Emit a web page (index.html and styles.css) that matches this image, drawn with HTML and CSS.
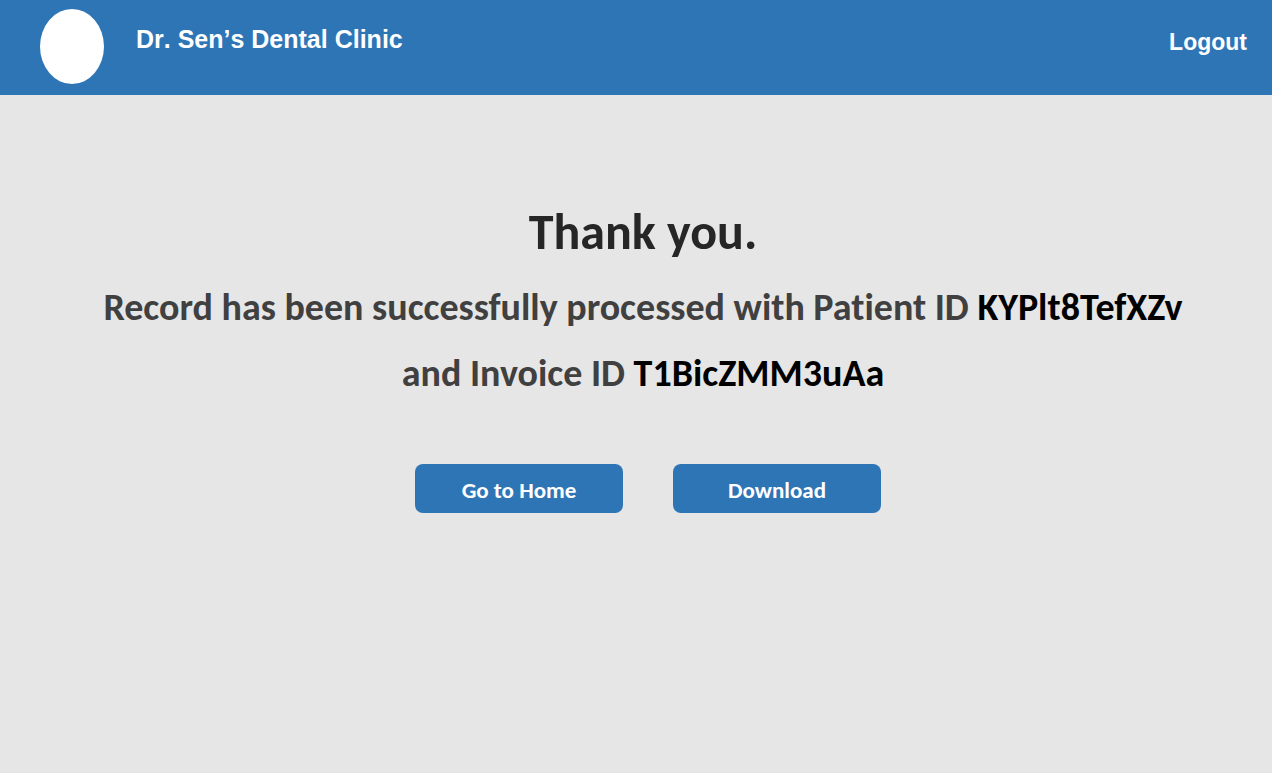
FILE: index.html
```html
<!DOCTYPE html>
<html lang="en">
<head>
<meta charset="utf-8">
<meta name="viewport" content="width=device-width, initial-scale=1">
<title>Dr. Sen’s Dental Clinic</title>
<link rel="stylesheet" href="styles.css">
</head>
<body>
<header class="topbar">
  <div class="brand">
    <span class="brand-logo" aria-hidden="true"></span>
    <span class="brand-name">Dr. Sen’s Dental Clinic</span>
  </div>
  <a class="logout" href="#">Logout</a>
</header>
<main class="confirmation">
  <h1 class="title">Thank you.</h1>
  <p class="message">Record has been successfully processed with Patient ID <strong class="record-id">KYPlt8TefXZv</strong><br>and Invoice ID <strong class="record-id">T1BicZMM3uAa</strong></p>
  <div class="actions">
    <button class="action" type="button">Go to Home</button>
    <button class="action" type="button">Download</button>
  </div>
</main>
</body>
</html>
```
FILE: styles.css
```css
* {
  box-sizing: border-box;
}

body {
  margin: 0;
  min-height: 100vh;
  background: #e6e6e6;
  font-family: Carlito, Calibri, Lato, sans-serif;
  font-variant-ligatures: none;
}

.topbar {
  display: flex;
  justify-content: space-between;
  align-items: flex-start;
  padding: 9px 25px 11px 40px;
  background: #2e75b6;
  color: #fff;
  font-family: "Liberation Sans", Arial, sans-serif;
  font-kerning: none;
  font-weight: 700;
}

.brand {
  display: flex;
  gap: 32px;
}

.brand-logo {
  width: 64px;
  height: 75px;
  border-radius: 50%;
  background: #fff;
}

.brand-name {
  padding-top: 15px;
  font-size: 25px;
  line-height: 30px;
}

.logout {
  padding-top: 18px;
  color: inherit;
  font-size: 23px;
  line-height: 30px;
  text-decoration: none;
}

.confirmation {
  display: flex;
  flex-direction: column;
  align-items: center;
  padding: 107px 24px 24px 38px;
}

.title {
  margin: 0;
  color: #262626;
  font-size: 50px;
  line-height: 60px;
}

.message {
  margin: 12px 0 0;
  color: #404040;
  font-size: 38px;
  font-weight: 700;
  line-height: 66px;
  text-align: center;
}

.record-id {
  color: #000;
}

.actions {
  display: flex;
  flex-wrap: wrap;
  gap: 50px;
  margin-top: 58px;
  padding-left: 10px;
}

.action {
  width: 208px;
  height: 49px;
  padding: 2px 0 0;
  border: 0;
  border-radius: 8px;
  background: #2e75b6;
  color: #fff;
  font: inherit;
  font-size: 23px;
  font-weight: 700;
  cursor: pointer;
}
```
